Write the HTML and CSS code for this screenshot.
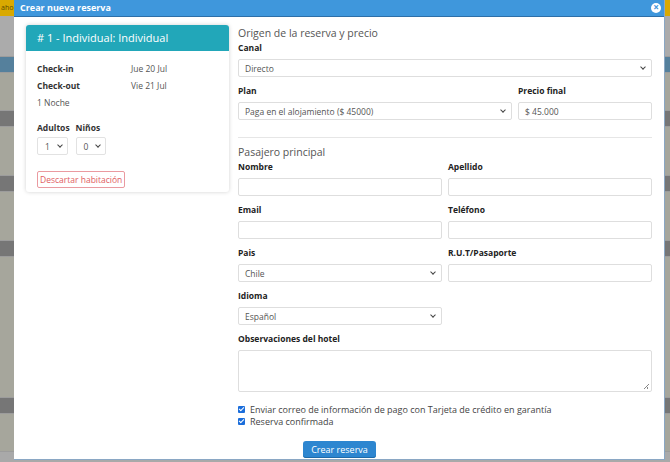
FILE: index.html
```html
<!DOCTYPE html>
<html lang="es">
<head>
    <meta charset="UTF-8">
    <title>Crear nueva reserva</title>
    <link rel="stylesheet" href="styles.css">
</head>
<body>
    <div class="page">
        <div class="topbar"><span>aho</span></div>
        <div class="row"></div>
        <div class="row head">V</div>
        <div class="row light"></div>
        <div class="row dark"></div>
        <div class="row light tall"></div>
        <div class="row dark"></div>
        <div class="row light tall"></div>
        <div class="row dark"></div>
        <div class="row light xtall"></div>
        <div class="row dark"></div>
        <div class="row light"></div>
    </div>

    <div class="modal">
        <div class="modal-header">
            <span>Crear nueva reserva</span>
            <span class="close">&times;</span>
        </div>
        <div class="modal-body">
            <div class="room-col">
                <div class="room-card">
                    <div class="room-title"># 1 - Individual: Individual</div>
                    <div class="room-info">
                        <div class="date-row"><b>Check-in</b><span>Jue 20 Jul</span></div>
                        <div class="date-row"><b>Check-out</b><span>Vie 21 Jul</span></div>
                        <div class="nights">1 Noche</div>
                        <div class="guests">
                            <div class="guest">
                                <b>Adultos</b>
                                <div class="mini-select">1 <span class="chev"></span></div>
                            </div>
                            <div class="guest">
                                <b>Niños</b>
                                <div class="mini-select">0 <span class="chev"></span></div>
                            </div>
                        </div>
                        <button class="discard">Descartar habitación</button>
                    </div>
                </div>
            </div>

            <div class="form-col">
                <div class="section-title">Origen de la reserva y precio</div>
                <label>Canal</label>
                <div class="field select">Directo <span class="chev"></span></div>
                <div class="grid plan-grid">
                    <div>
                        <label>Plan</label>
                        <div class="field select">Paga en el alojamiento ($ 45000) <span class="chev"></span></div>
                    </div>
                    <div>
                        <label>Precio final</label>
                        <div class="field">$ 45.000</div>
                    </div>
                </div>

                <hr>

                <div class="section-title">Pasajero principal</div>
                <div class="grid two">
                    <div><label>Nombre</label><div class="field"></div></div>
                    <div><label>Apellido</label><div class="field"></div></div>
                    <div><label>Email</label><div class="field"></div></div>
                    <div><label>Teléfono</label><div class="field"></div></div>
                    <div><label>Pais</label><div class="field select">Chile <span class="chev"></span></div></div>
                    <div><label>R.U.T/Pasaporte</label><div class="field"></div></div>
                    <div><label>Idioma</label><div class="field select">Español <span class="chev"></span></div></div>
                </div>
                <label>Observaciones del hotel</label>
                <div class="field textarea"><span class="grip"></span></div>

                <div class="check"><span class="box"></span>Enviar correo de información de pago con Tarjeta de crédito en garantía</div>
                <div class="check"><span class="box"></span>Reserva confirmada</div>

                <div class="actions">
                    <button class="primary">Crear reserva</button>
                </div>
            </div>
        </div>
    </div>
</body>
</html>
```

FILE: styles.css
```css
body {
    margin: 0;
    font-family: "Open Sans", "DejaVu Sans", sans-serif;
    color: #333;
    background: #a9a9a9;
    overflow: hidden;
}
.page {
    height: 462px;
}
.topbar {
    height: 16px;
    background: #d9a900;
    color: #5a4a00;
    font-size: 7px;
    line-height: 16px;
    padding-left: 1px;
}
.row {
    height: 40px;
    border-bottom: 1px solid #9c9c9c;
    background: #ababab;
}
.row.head {
    height: 15px;
    background: #55809c;
    color: #c7d7e2;
    font-size: 9px;
    line-height: 15px;
    padding-left: 30px;
}
.row.light { height: 37px; background: #a6a69c; }
.row.light.tall { height: 48px; }
.row.light.xtall { height: 140px; }
.row.dark { height: 15px; background: #767676; }

.modal {
    position: absolute;
    left: 14px;
    top: 0;
    width: 650px;
    height: 459px;
    background: #fff;
    border-bottom: 1px solid #8aa7c4;
    border-right: 1px solid #8aa7c4;
}
.modal-header {
    height: 16px;
    background: #3f97dc;
    color: #fff;
    font-size: 9px;
    font-weight: 700;
    line-height: 16px;
    padding-left: 6px;
    display: flex;
    justify-content: space-between;
    align-items: center;
    border-bottom: 1px solid #2d6fa8;
}
.close {
    width: 10px;
    height: 10px;
    border-radius: 50%;
    background: #fff;
    color: #3f97dc;
    font-size: 10px;
    line-height: 9px;
    text-align: center;
    margin-right: 3px;
}
.modal-body {
    display: flex;
    gap: 9px;
    padding: 8px 12px 0 12px;
}
.room-col {
    width: 203px;
    flex-shrink: 0;
}
.room-card {
    background: #fff;
    border-radius: 3px;
    box-shadow: 0 0 4px rgba(0, 0, 0, 0.18);
    overflow: hidden;
}
.room-title {
    background: #22a7b9;
    color: #fff;
    font-size: 11px;
    height: 26px;
    line-height: 26px;
    padding-left: 11px;
}
.room-info {
    padding: 9px 11px 4px 11px;
    font-size: 8.5px;
}
.date-row {
    display: flex;
    height: 17px;
    align-items: center;
}
.date-row b {
    width: 94px;
}
.date-row span {
    color: #555;
}
.nights {
    color: #555;
    height: 17px;
    line-height: 17px;
}
.guests {
    display: flex;
    gap: 6px;
    margin-top: 11px;
}
.guest b {
    display: block;
    margin-bottom: 4px;
}
.mini-select {
    width: 31px;
    height: 18px;
    box-sizing: border-box;
    border: 1px solid #e2e2e2;
    border-radius: 2px;
    display: flex;
    justify-content: space-between;
    align-items: center;
    padding: 0 5px 0 7px;
    color: #555;
}
.guest:last-child .mini-select {
    width: 30px;
}
.discard {
    margin-top: 16px;
    font-family: inherit;
    font-size: 8.5px;
    color: #e05c62;
    background: #fff;
    border: 1px solid #ea9aa0;
    border-radius: 2px;
    padding: 2px 2px;
}

.form-col {
    flex: 1;
    font-size: 8.5px;
    padding-top: 1px;
}
.section-title {
    font-size: 10.5px;
    line-height: 14px;
    color: #555;
    margin-bottom: 2px;
}
label {
    display: block;
    font-weight: 700;
    color: #222;
    line-height: 12px;
    margin-bottom: 5px;
}
.field {
    height: 18px;
    box-sizing: border-box;
    border: 1px solid #dedede;
    border-radius: 2px;
    padding: 0 6px;
    display: flex;
    align-items: center;
    justify-content: space-between;
    color: #555;
    margin-bottom: 8px;
}
.chev {
    width: 3px;
    height: 3px;
    border-right: 1.2px solid #444;
    border-bottom: 1.2px solid #444;
    transform: rotate(45deg);
    margin-top: -3px;
}
.grid {
    display: grid;
    column-gap: 6px;
}
.plan-grid {
    grid-template-columns: 274px 1fr;
    margin-top: 3px;
}
.grid.two {
    grid-template-columns: 1fr 1fr;
    row-gap: 0;
}
hr {
    border: none;
    border-top: 1px solid #e6e6e6;
    margin: 9px 0 7px;
}
.textarea {
    height: 42px;
    position: relative;
    margin-bottom: 11px;
}
.grip {
    position: absolute;
    right: 2px;
    bottom: 2px;
    width: 5px;
    height: 5px;
    background: linear-gradient(135deg, transparent 45%, #888 45%, #888 55%, transparent 55%, transparent 70%, #888 70%, #888 80%, transparent 80%);
}
.check {
    display: flex;
    align-items: center;
    gap: 5px;
    color: #444;
    height: 12px;
    font-size: 9px;
}
.box {
    width: 7px;
    height: 7px;
    background: #1a6ddb;
    border-radius: 1px;
    position: relative;
}
.box::after {
    content: "";
    position: absolute;
    left: 2px;
    top: 0;
    width: 2px;
    height: 4px;
    border-right: 1px solid #fff;
    border-bottom: 1px solid #fff;
    transform: rotate(45deg);
}
.actions {
    padding-left: 65px;
    margin-top: 14px;
}
.primary {
    background: #2d86d0;
    color: #fff;
    border: none;
    border-radius: 3px;
    font-family: inherit;
    font-size: 9px;
    width: 73px;
    height: 17px;
    box-shadow: inset 0 -1px 0 #1e6aa8;
}
```
